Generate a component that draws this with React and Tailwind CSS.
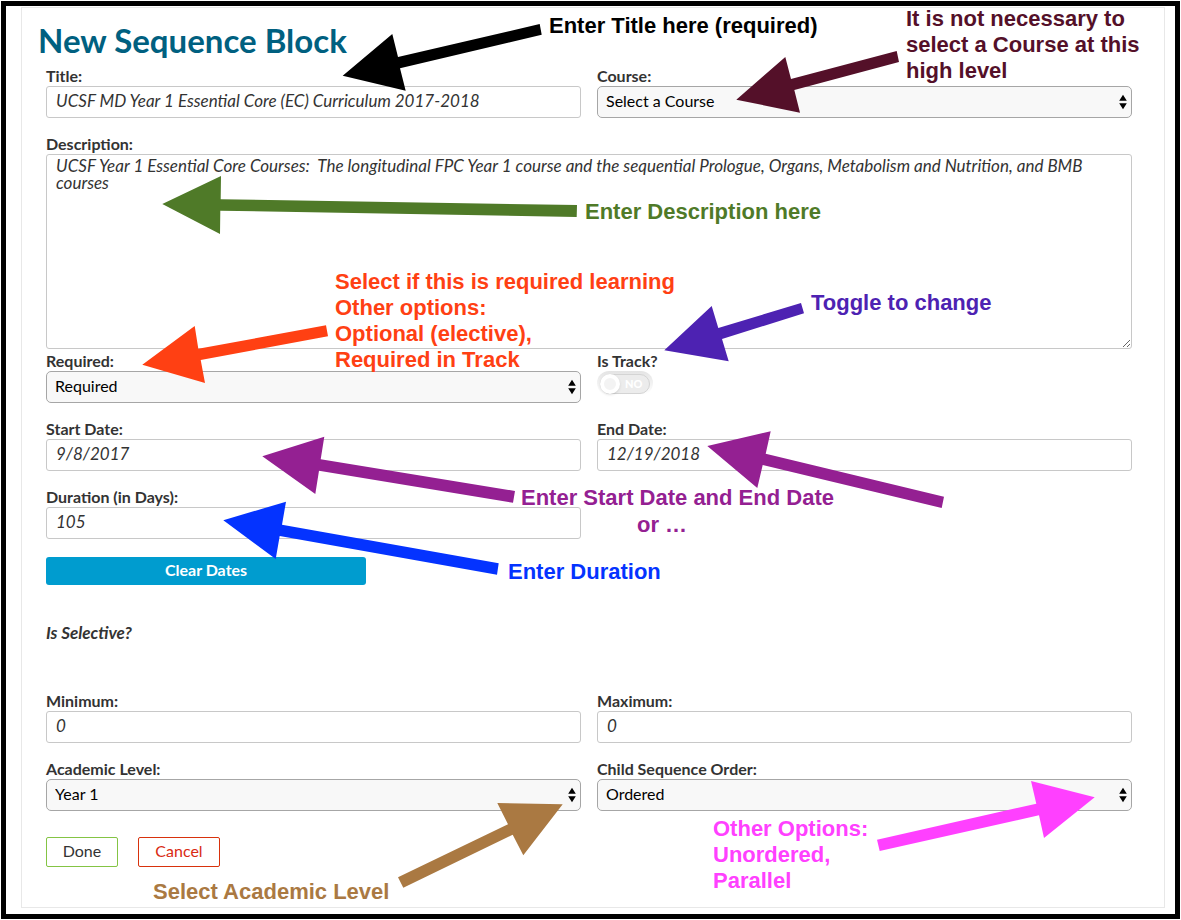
import React, { useState } from "react";

const arrows = [
  { color: "#000000", points: "342.7,75.7 392.3,34 398,57 539.7,24 541.7,34.7 400,68.3 405.7,90.7" },
  { color: "#541029", points: "736.3,99.7 785.3,57 791,79 896.7,51 899,62 794.3,90 800,112.7" },
  { color: "#4f7a28", points: "162.3,204 221,176 220.7,199.3 577,205 576.7,217 220.3,210.7 220,234" },
  { color: "#ff4013", points: "142.3,364.7 194.7,326 198.3,348.7 326,325.3 328,336.3 200.7,360 205,383" },
  { color: "#4d22b2", points: "664.3,350.3 711.7,306 718.3,328 801,303 804,313.3 722,339 728.7,361.3" },
  { color: "#942092", points: "262.3,456.3 324.3,436.7 320.7,459.3 515,491 513,502.7 319,470.7 315.3,494" },
  { color: "#942092", points: "707.3,446 770.7,431.3 765.7,453.7 944,496.7 941.7,508 762.7,465 757.3,488" },
  { color: "#0433ff", points: "223.3,520.3 286,501.7 282,524.7 498.7,563.3 497,574.7 279.7,536 275.7,559" },
  { color: "#aa7942", points: "562.7,804.3 497.3,803 508,824.3 398,877.3 403.3,887.7 512.7,834.7 523.3,855.3" },
  { color: "#ff40ff", points: "1094.7,797.3 1031,781 1036.3,803.7 877,839.7 879.7,851 1039,815.3 1044,838" },
];

const notes = [
  { className: "left-[549px] top-[13px] text-black", lines: ["Enter Title here (required)"] },
  {
    className: "left-[906px] top-[6px] text-[#541029]",
    lines: ["It is not necessary to", "select a Course at this", "high level"],
  },
  { className: "left-[585px] top-[199px] text-[#4f7a28]", lines: ["Enter Description here"] },
  {
    className: "left-[335px] top-[269px] text-[#ff4013]",
    lines: ["Select if this is required learning", "Other options:", "Optional (elective),", "Required in Track"],
  },
  { className: "left-[811px] top-[290px] text-[#4d22b2]", lines: ["Toggle to change"] },
  { className: "left-[521px] top-[485px] text-[#942092]", lines: ["Enter Start Date and End Date"] },
  { className: "left-[637px] top-[512px] text-[#942092]", lines: ["or …"] },
  { className: "left-[508px] top-[559px] text-[#0433ff]", lines: ["Enter Duration"] },
  { className: "left-[153px] top-[879px] text-[#aa7942]", lines: ["Select Academic Level"] },
  { className: "left-[713px] top-[816px] text-[#ff40ff]", lines: ["Other Options:", "Unordered,", "Parallel"] },
];

const labelClass = "block pb-0.5 text-base leading-4 font-bold text-[#333]";

function TextField({ id, label, value }) {
  return (
    <div>
      <label htmlFor={id} className={labelClass}>{label}</label>
      <input
        id={id}
        type="text"
        defaultValue={value}
        className="block h-8 w-full rounded-[3px] border border-[#c8c8c8] bg-white px-[9px] pb-1 text-[17px] text-[#333] italic"
      />
    </div>
  );
}

function SelectField({ id, label, options }) {
  return (
    <div>
      <label htmlFor={id} className={labelClass}>{label}</label>
      <div className="relative">
        <select
          id={id}
          className="block h-8 w-full appearance-none rounded-[5px] border border-[#a6a6a6] bg-[#f8f8f8] px-2 pb-0.5 text-base leading-6 text-black"
        >
          {options.map((option) => (
            <option key={option}>{option}</option>
          ))}
        </select>
        <svg
          className="pointer-events-none absolute top-2 right-[5px] h-4 w-2"
          viewBox="0 0 8 16"
          aria-hidden="true"
        >
          <path d="M4 0.7 L7.8 6.8 H0.2 Z M4 15.3 L7.8 9.2 H0.2 Z" fill="#000" />
        </svg>
      </div>
    </div>
  );
}

function TrackToggle() {
  const [on, setOn] = useState(false);
  return (
    <div>
      <label htmlFor="is-track" className={labelClass}>Is Track?</label>
      <div className="relative h-6 w-14 rounded-full bg-linear-to-b from-[#e4e4e4] to-white p-[3px]">
        <input
          id="is-track"
          type="checkbox"
          checked={on}
          onChange={(event) => setOn(event.target.checked)}
          className="block h-5 w-[50px] appearance-none rounded-full border border-[#d4d4d4] bg-[#ececec]"
        />
        <span className="pointer-events-none absolute top-[3px] left-[3px] size-5 rounded-full border-4 border-white bg-[#f3f3f3] shadow-sm" />
        <span className="pointer-events-none absolute top-[3px] left-7 text-[11px] leading-5 font-black text-white">
          {on ? "YES" : "NO"}
        </span>
      </div>
    </div>
  );
}

export default function App() {
  return (
    <div className="relative min-h-screen bg-white p-px font-[Lato,sans-serif]">
      <div className="border-[5px] border-black pt-px pr-[10px] pb-[6px] pl-[15px]">
        <main className="border border-[#e8e8e8]">
          <h1 className="pt-1 pl-4 text-[33px] leading-[56px] font-bold text-[#006080]">New Sequence Block</h1>
          <form className="pr-8 pb-10 pl-6" onSubmit={(event) => event.preventDefault()}>
            <div className="grid grid-cols-2 gap-x-4 gap-y-[18px]">
              <TextField id="title" label="Title:" value="UCSF MD Year 1 Essential Core (EC) Curriculum 2017-2018" />
              <SelectField id="course" label="Course:" options={["Select a Course"]} />
            </div>
            <div className="mt-[18px] mb-1">
              <label htmlFor="description" className={labelClass}>Description:</label>
              <textarea
                id="description"
                className="block h-[195px] w-full rounded-[3px] border border-[#c8c8c8] bg-white px-[9px] pt-0.5 text-[17px] leading-[17px] text-[#333] italic"
                defaultValue="UCSF Year 1 Essential Core Courses:  The longitudinal FPC Year 1 course and the sequential Prologue, Organs, Metabolism and Nutrition, and BMB courses"
              />
            </div>
            <div className="grid grid-cols-2 gap-x-4 gap-y-[18px]">
              <SelectField id="required" label="Required:" options={["Required", "Optional (elective)", "Required in Track"]} />
              <TrackToggle />
              <TextField id="start-date" label="Start Date:" value="9/8/2017" />
              <TextField id="end-date" label="End Date:" value="12/19/2018" />
              <TextField id="duration" label="Duration (in Days):" value="105" />
            </div>
            <button
              type="button"
              className="mt-[18px] block h-7 w-80 rounded-[3px] bg-[#009ccf] pb-0.5 text-base leading-6 font-bold text-white"
            >
              Clear Dates
            </button>
            <p className="mt-10 pb-0.5 text-[17px] leading-4 font-bold text-[#333] italic">Is Selective?</p>
            <div className="mt-[50px] grid grid-cols-2 gap-x-4 gap-y-[18px]">
              <TextField id="minimum" label="Minimum:" value="0" />
              <TextField id="maximum" label="Maximum:" value="0" />
              <SelectField id="level" label="Academic Level:" options={["Year 1", "Year 2", "Year 3", "Year 4"]} />
              <SelectField id="order" label="Child Sequence Order:" options={["Ordered", "Unordered", "Parallel"]} />
            </div>
            <div className="mt-[26px] flex gap-5">
              <button type="submit" className="h-[30px] w-[72px] rounded-[2px] border border-[#84c444] bg-white pb-0.5 text-base leading-6 text-[#333]">
                Done
              </button>
              <button type="button" className="h-[30px] w-[82px] rounded-[2px] border border-[#d8320c] bg-white pb-0.5 text-base leading-6 text-[#d92a12]">
                Cancel
              </button>
            </div>
          </form>
        </main>
      </div>
      <div className="pointer-events-none absolute inset-0 overflow-hidden">
        <svg className="absolute top-0 left-0 h-[920px] w-[1181px]" viewBox="0 0 1181 920" aria-hidden="true">
          {arrows.map((arrow) => (
            <polygon key={arrow.points} points={arrow.points} fill={arrow.color} />
          ))}
        </svg>
        {notes.map((note) => (
          <p
            key={note.lines[0]}
            className={
              "absolute font-['Liberation_Sans',Arial,sans-serif] text-[22px] leading-[26px] font-bold whitespace-nowrap " +
              note.className
            }
          >
            {note.lines.map((line) => (
              <span key={line} className="block">{line}</span>
            ))}
          </p>
        ))}
      </div>
    </div>
  );
}
